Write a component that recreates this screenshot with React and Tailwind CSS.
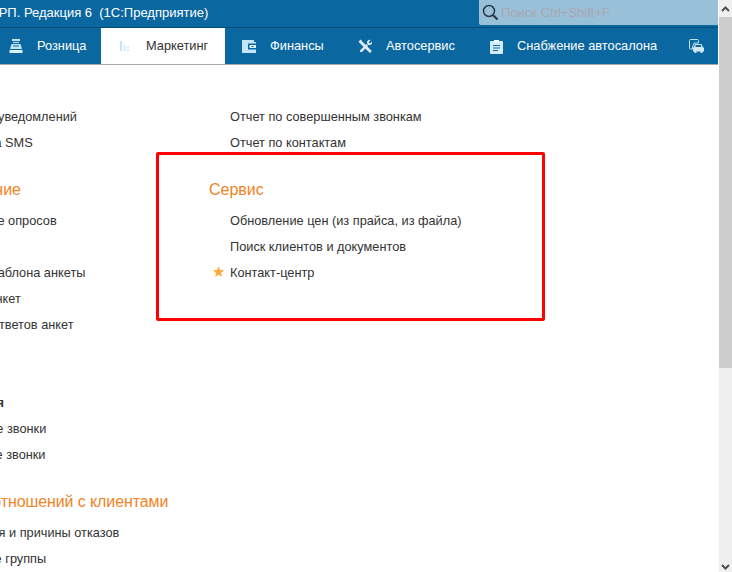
function RetailIcon() {
  return (
    <svg width="16" height="16" viewBox="0 0 16 16" fill="#c4e4f8">
      <rect x="4" y="1" width="8" height="2" />
      <path d="M5 4h6v1H5z" />
      <path d="M3.500 6h9l1.500 5h-12z" />
      <rect x="1.500" y="12" width="13" height="3" fill="#dff1fb" />
      <rect x="5" y="7.500" width="6" height="1" fill="#0a67a0" />
    </svg>
  );
}
function ChartIcon() {
  return (
    <svg width="12" height="12" viewBox="0 0 12 12" fill="#c3e6fb">
      <rect x="1" y="1" width="2" height="10" />
      <rect x="4.500" y="5" width="2" height="6" fill="#d4edfb" />
      <rect x="8" y="6" width="2" height="2" fill="#d4edfb" />
      <rect x="8" y="9" width="2" height="2" fill="#d4edfb" />
    </svg>
  );
}
function WalletIcon() {
  return (
    <svg width="14" height="13" viewBox="0 0 14 13">
      <path d="M0 0h12v2h2v11H0z" fill="#c4e4f8" />
      <rect x="6" y="3.500" width="8" height="6" fill="#0a67a0" />
      <rect x="7.500" y="5" width="6.500" height="3" fill="#dff1fb" />
      <rect x="9.500" y="6" width="2" height="1" fill="#0a67a0" />
    </svg>
  );
}
function ToolsIcon() {
  return (
    <svg width="15" height="15" viewBox="0 0 15 15" fill="#dff1fb">
      <path d="M1.200 3.400 3.200 1.400 13.800 12l-1.900 2z" />
      <path d="M0.500 2.800 2.600 0.600 4 2 2 4z" />
      <path d="M2.200 11.200 8.400 5l1.700 1.700-6.200 6.200-1.900.2z" />
      <path d="M9 4.500c-.5-2 1-4 3.600-3.600L10.600 3l1.400 1.400 2.100-2c.4 2.600-1.700 4.100-3.600 3.600z" />
    </svg>
  );
}
function ClipboardIcon() {
  return (
    <svg width="13" height="15" viewBox="0 0 13 15">
      <path d="M1 2h3V1h5v1h3a1 1 0 0 1 1 1v11a1 1 0 0 1-1 1H1a1 1 0 0 1-1-1V3a1 1 0 0 1 1-1z" fill="#d2ebfa" />
      <rect x="4" y="1" width="5" height="2.500" fill="#f2fafe" />
      <rect x="3" y="6" width="7" height="1" fill="#0a67a0" />
      <rect x="3" y="8.500" width="7" height="1" fill="#0a67a0" />
      <rect x="3" y="11" width="5" height="1" fill="#0a67a0" />
    </svg>
  );
}
function CarsIcon() {
  return (
    <svg width="16" height="14" viewBox="0 0 16 14">
      <path d="M1.500 .5h7a1 1 0 0 1 1 1V4H5L3.500 8v2H1.500a1 1 0 0 1-1-1V1.500a1 1 0 0 1 1-1z" fill="none" stroke="#bfe0f5" strokeWidth="1" />
      <path d="M6 5h6.500l1.500 3.500h1v4h-1.500v1.500h-2v-1.500h-4v1.500h-2v-1.500H4v-4h.5z" fill="#cfe9f9" />
      <rect x="6.500" y="6" width="5.500" height="2" fill="#0a67a0" />
    </svg>
  );
}

function Tab({ icon, label, active, width }) {
  return (
    <div className={`flex h-full shrink-0 items-center pl-4 ${width} ${active ? "bg-white text-[#333]" : "text-white"}`}>
      <span className="mr-[13px] flex h-4 w-4 shrink-0 items-center justify-center">{icon}</span>
      <span>{label}</span>
    </div>
  );
}

function Row({ children, offset = "", bold }) {
  return (
    <div className={`flex h-[26px] items-center whitespace-nowrap text-[12.75px] ${bold ? "font-bold" : ""} ${offset}`}>
      {children}
    </div>
  );
}
function Heading({ children, offset = "" }) {
  return (
    <div className={`flex h-[52px] items-center whitespace-nowrap pt-[16px] text-[16px] text-[#f0841f] ${offset}`}>
      {children}
    </div>
  );
}

export default function App() {
  return (
    <div className="flex h-[572px] w-[732px] overflow-hidden bg-white font-['Liberation_Sans',Arial,sans-serif] text-[#333]">
      <div className="w-[718px] shrink-0 overflow-hidden">
        <header className="bg-[#0a67a0]">
          <div className="flex h-[27px] items-start justify-between">
            <div className="-ml-[10px] whitespace-pre pt-[3px] text-[13px] leading-[20px] text-white">ЕРП. Редакция 6  (1С:Предприятие)</div>
            <div className="flex h-[25px] w-[239px] items-center rounded-bl-[2px] bg-[#98c0d9] pl-[3px]">
              <svg width="17" height="17" viewBox="0 0 17 17" fill="none" stroke="#2b3a44" strokeWidth="1.500">
                <circle cx="7" cy="7" r="5.500" />
                <path d="M11 11l4.500 4.500" strokeWidth="2.200" />
              </svg>
              <span className="ml-[2px] whitespace-nowrap text-[13px] text-[#aca6ae]">Поиск Ctrl+Shift+F</span>
            </div>
          </div>
          <div className="h-px bg-[#004a78]" />
          <nav className="-ml-[8px] flex h-[36px] items-stretch overflow-hidden whitespace-nowrap text-[12.8px]">
            <Tab icon={<RetailIcon />} label="Розница" width="w-[109px]" />
            <Tab icon={<ChartIcon />} label="Маркетинг" width="w-[124px]" active />
            <Tab icon={<WalletIcon />} label="Финансы" width="w-[116px]" />
            <Tab icon={<ToolsIcon />} label="Автосервис" width="w-[131px]" />
            <Tab icon={<ClipboardIcon />} label="Снабжение автосалона" width="w-[201px]" />
            <Tab icon={<CarsIcon />} label="Склад" width="w-[100px]" />
          </nav>
          <div className="h-[1px] bg-[#a8a8a8]" />
        </header>

        <main className="relative flex pt-[39px]">
          <div className="w-[209px] shrink-0 overflow-hidden">
            <Row offset="-ml-[2px]">уведомлений</Row>
            <Row offset="-ml-[56px]">Рассылка SMS</Row>
            <Heading offset="-ml-[92px]">Анкетирование</Heading>
            <Row offset="-ml-[68px]">Проведение опросов</Row>
            <Row />
            <Row offset="-ml-[14px]">Шаблона анкеты</Row>
            <Row offset="-ml-[13px]">Анкет</Row>
            <Row offset="-ml-[11px]">Ответов анкет</Row>
            <div className="h-[52px]" />
            <Row offset="-ml-[67px]" bold>Телефония</Row>
            <Row offset="-ml-[57px]">Входящие звонки</Row>
            <Row offset="-ml-[65px]">Исходящие звонки</Row>
            <Heading offset="-ml-[100px] tracking-[-0.1px]">Управление отношений с клиентами</Heading>
            <Row offset="-ml-[58px]">Состояния и причины отказов</Row>
            <Row offset="-ml-[52px]">Ценовые группы</Row>
          </div>
          <div className="flex-1">
            <div className="pl-[21px]">
              <Row>Отчет по совершенным звонкам</Row>
              <Row>Отчет по контактам</Row>
            </div>
            <Heading>Сервис</Heading>
            <div className="pl-[21px]">
              <Row>Обновление цен (из прайса, из файла)</Row>
              <Row>Поиск клиентов и документов</Row>
              <div className="relative">
                <span className="absolute -left-[18px] top-[4px] text-[15px] leading-[15px] text-[#ffa733]">★</span>
                <Row>Контакт-центр</Row>
              </div>
            </div>
          </div>
          <div className="absolute left-[156px] top-[87px] h-[169px] w-[389px] rounded-[2px] border-[3px] border-[#ff0000]" />
        </main>
      </div>
      <div className="ml-px flex w-[13px] shrink-0 flex-col bg-[#f0f0f0]">
        <div className="flex h-[17px] items-center justify-center bg-[#f0f0f0]">
          <svg width="9" height="6" viewBox="0 0 9 6" fill="none" stroke="#505050" strokeWidth="2">
            <path d="M1 5l3.500-3.500L8 5" />
          </svg>
        </div>
        <div className="h-[351px] bg-[#cdcdcd]" />
        <div className="flex-1" />
        <div className="flex h-[17px] items-center justify-center pt-[7px]">
          <svg width="9" height="6" viewBox="0 0 9 6" fill="none" stroke="#505050" strokeWidth="2">
            <path d="M1 1l3.500 3.500L8 1" />
          </svg>
        </div>
      </div>
    </div>
  );
}
